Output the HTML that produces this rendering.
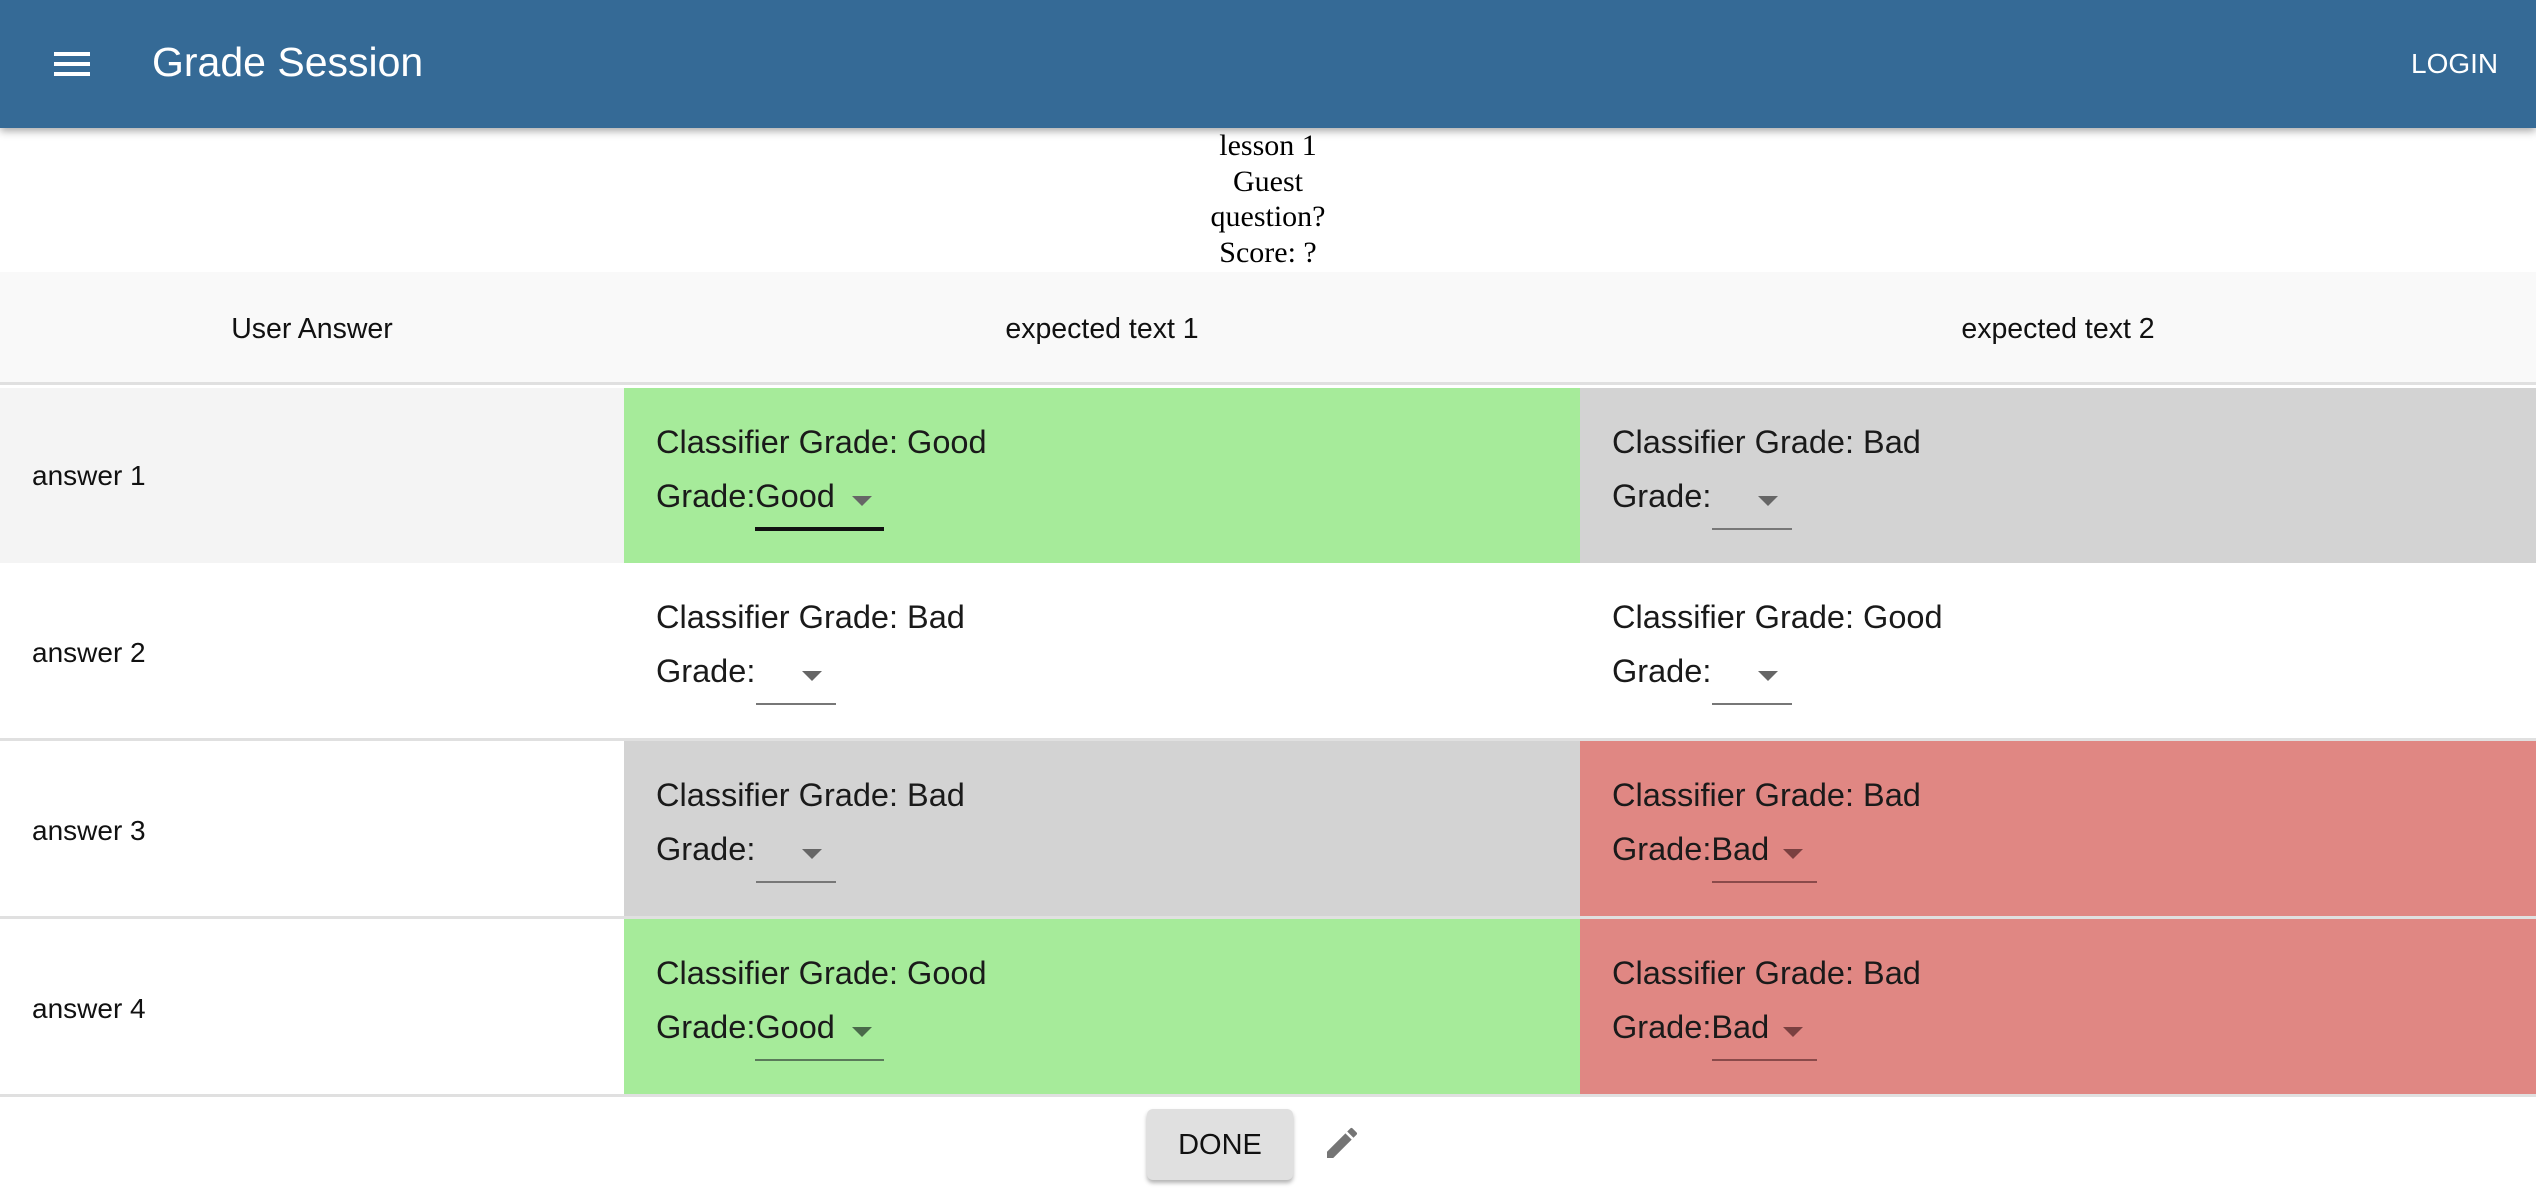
<!DOCTYPE html>
<html><head><meta charset="utf-8"><style>
*{box-sizing:border-box;margin:0;padding:0}
body{width:2536px;height:1194px;overflow:hidden;background:#fff;font-family:"Liberation Sans",Arial,sans-serif;position:relative}
.bar{position:absolute;left:0;top:0;width:2536px;height:128px;background:#356a96;box-shadow:0 3px 8px rgba(0,0,0,.35);z-index:2}
.hb{position:absolute;left:54px;width:36px;height:4px;background:#fff}
.title{position:absolute;left:152px;top:38px;font-size:41px;color:#fff;line-height:48px}
.login{position:absolute;left:2411px;top:47px;font-size:28px;color:#fff;line-height:34px}
.info{position:absolute;left:0;width:2536px;top:128px;text-align:center;font-family:"Liberation Serif",serif;font-size:30px;line-height:35.5px;color:#000}
.thead{position:absolute;left:0;top:272px;width:2536px;height:113px;background:#f9f9f9;border-bottom:3px solid #e0e0e0}
.th{position:absolute;top:2px;height:110px;line-height:110px;text-align:center;font-size:28.5px;color:#111}
.row{position:absolute;left:0;width:2536px;height:178px;border-bottom:3px solid #e0e0e0}
.c{position:absolute;top:0;height:175px}
.ans{left:0;width:624px;font-size:28px;line-height:179px;padding-left:32px;color:#111}
.cell{width:956px;font-size:32.5px;color:#1a1a1a}
.l1{position:absolute;left:32px;top:36px}
.l2{position:absolute;left:32px;top:90px}
.ul{position:absolute;top:140px;height:2px;background:#777}
.arr{position:absolute;top:108px;width:0;height:0;border-left:10px solid transparent;border-right:10px solid transparent;border-top:10px solid #666}
.g{background:#a6eb9a}.gr{background:#d3d3d3}.r{background:#e08783}
.btn{position:absolute;left:1147px;top:1109px;width:146px;height:71px;background:#e0e0e0;border-radius:6px;box-shadow:0 3px 4px rgba(0,0,0,.3);font-size:29px;line-height:73px;text-align:center;color:#111}
</style></head><body>
<div class="bar">
<div class="hb" style="top:52px"></div><div class="hb" style="top:62px"></div><div class="hb" style="top:72px"></div>
<div class="title">Grade Session</div>
<div class="login">LOGIN</div>
</div>
<div class="info">lesson 1<br>Guest<br>question?<br>Score: ?</div>
<div class="thead">
<div class="th" style="left:0;width:624px">User Answer</div>
<div class="th" style="left:624px;width:956px">expected text 1</div>
<div class="th" style="left:1580px;width:956px">expected text 2</div>
</div>

<div class="row" style="top:388px;height:175px">
<div class="c ans" style="background:#f4f4f4;line-height:175px">answer 1</div>
<div class="c cell g" style="left:624px"><div class="l1">Classifier Grade: Good</div><div class="l2">Grade:Good</div><div class="arr" style="left:228px"></div><div class="ul" style="left:131px;width:129px;height:4px;background:#111;top:139px"></div></div>
<div class="c cell gr" style="left:1580px"><div class="l1">Classifier Grade: Bad</div><div class="l2">Grade:</div><div class="arr" style="left:178px"></div><div class="ul" style="left:132px;width:80px"></div></div>
</div>

<div class="row" style="top:563px">
<div class="c ans">answer 2</div>
<div class="c cell" style="left:624px"><div class="l1">Classifier Grade: Bad</div><div class="l2">Grade:</div><div class="arr" style="left:178px"></div><div class="ul" style="left:132px;width:80px"></div></div>
<div class="c cell" style="left:1580px"><div class="l1">Classifier Grade: Good</div><div class="l2">Grade:</div><div class="arr" style="left:178px"></div><div class="ul" style="left:132px;width:80px"></div></div>
</div>

<div class="row" style="top:741px">
<div class="c ans">answer 3</div>
<div class="c cell gr" style="left:624px"><div class="l1">Classifier Grade: Bad</div><div class="l2">Grade:</div><div class="arr" style="left:178px"></div><div class="ul" style="left:132px;width:80px"></div></div>
<div class="c cell r" style="left:1580px"><div class="l1">Classifier Grade: Bad</div><div class="l2">Grade:Bad</div><div class="arr" style="left:203px;border-top-color:#7a4040"></div><div class="ul" style="left:132px;width:105px;background:#8a4a4a"></div></div>
</div>

<div class="row" style="top:919px">
<div class="c ans">answer 4</div>
<div class="c cell g" style="left:624px"><div class="l1">Classifier Grade: Good</div><div class="l2">Grade:Good</div><div class="arr" style="left:228px;border-top-color:#4a6a4a"></div><div class="ul" style="left:131px;width:129px;background:#5a7a5a"></div></div>
<div class="c cell r" style="left:1580px"><div class="l1">Classifier Grade: Bad</div><div class="l2">Grade:Bad</div><div class="arr" style="left:203px;border-top-color:#7a4040"></div><div class="ul" style="left:132px;width:105px;background:#8a4a4a"></div></div>
</div>

<div class="btn">DONE</div>
<svg style="position:absolute;left:1322px;top:1120px" width="40" height="46" viewBox="0 0 24 24"><path fill="#757575" d="M3 17.25V21h3.75L17.81 9.94l-3.75-3.75L3 17.25zM20.71 7.04a1 1 0 0 0 0-1.41l-2.34-2.34a1 1 0 0 0-1.41 0l-1.83 1.83 3.75 3.75 1.83-1.83z"/></svg>
</body></html>
